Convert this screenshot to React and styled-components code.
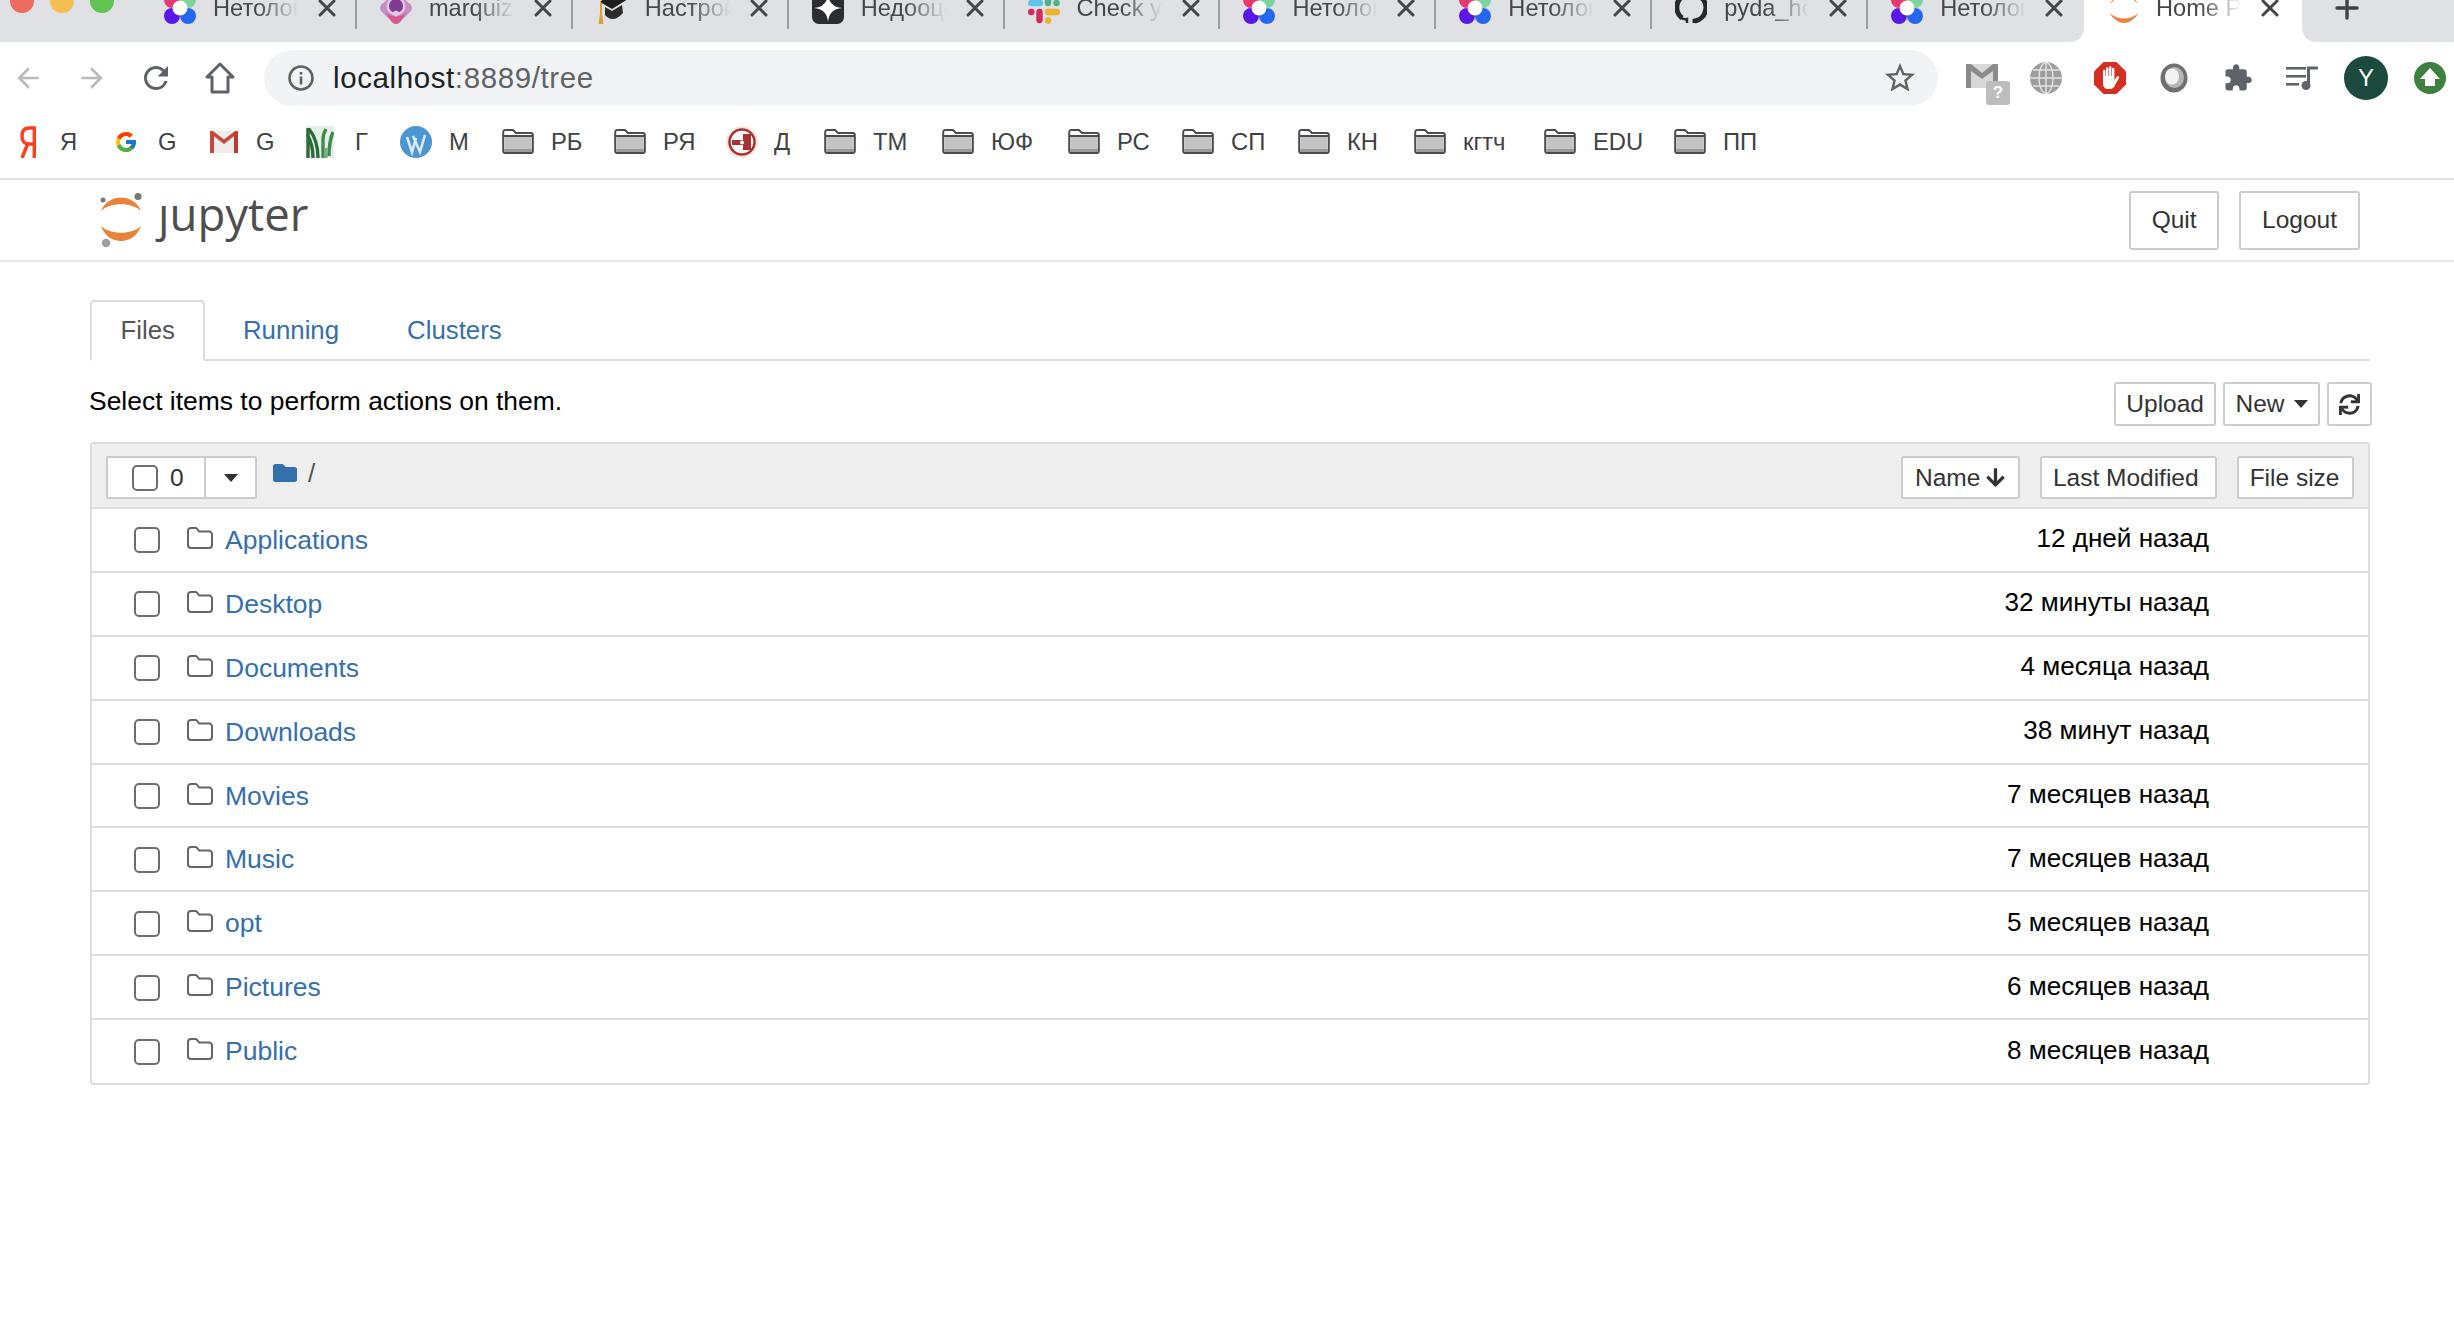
import React from 'react'
import styled, { createGlobalStyle } from 'styled-components'
import { FcGoogle } from 'react-icons/fc'
import { FaFolder, FaArrowDown, FaSync } from 'react-icons/fa'

const GlobalStyle = createGlobalStyle`
    html, body {
        margin: 0;
        padding: 0;
        background: #fff;
        overflow: hidden;
    }
    body {
        font-family: "Liberation Sans", Arial, sans-serif;
        color: #000;
    }
    svg {
        display: block;
        flex-shrink: 0;
    }
`

const Page = styled.div`
    width: 2454px;
    height: 1340px;
    overflow: hidden;
    background: #fff;
`

/* browser chrome */
const TabStrip = styled.div`
    display: flex;
    height: 42px;
    overflow: hidden;
    background: #fff;
`
const TabsLeft = styled.div`
    display: flex;
    width: 2084px;
    padding-left: 141px;
    box-sizing: border-box;
    background: #dfe1e5;
    border-bottom-right-radius: 14px;
`
const Lights = styled.div`
    display: flex;
    gap: 16px;
    margin-left: -131px;
    margin-right: 27px;
    margin-top: -11px;
`
const Light = styled.span`
    display: block;
    width: 24px;
    height: 24px;
    border-radius: 50%;
    background: ${props => props.$color};
`
const Tab = styled.div`
    display: flex;
    align-items: center;
    box-sizing: border-box;
    width: ${props => props.$active ? '218px' : '216px'};
    height: ${props => props.$active ? '42px' : '29px'};
    padding: 0 0 ${props => props.$active ? '26px' : '13px'} ${props => props.$active ? '25px' : '23px'};
    background: ${props => props.$active ? '#fff' : 'transparent'};
    border-right: ${props => props.$sep ? '2px solid #9b9da1' : '0'};
`
const TabTitle = styled.span`
    display: block;
    width: 89px;
    margin-left: 17px;
    overflow: hidden;
    white-space: nowrap;
    font-size: 23.6px;
    line-height: 30px;
    color: #45474a;
    -webkit-mask-image: linear-gradient(to right, #000 50%, transparent 96%);
    mask-image: linear-gradient(to right, #000 50%, transparent 96%);
`
const TabClose = styled.span`
    display: block;
    margin-left: 16px;
`
const TabsRight = styled.div`
    flex: 1;
    padding: 0 0 0 33px;
    background: #dfe1e5;
    border-bottom-left-radius: 14px;
`

const Toolbar = styled.div`
    display: flex;
    align-items: center;
    height: 72px;
    box-sizing: border-box;
`
const ToolSlot = styled.div`
    display: flex;
    flex-shrink: 0;
    align-items: center;
    justify-content: center;
    width: 56px;
    height: 56px;
    margin-right: 8px;
`
const BadgeWrap = styled.div`
    position: relative;
    width: 32px;
    height: 24px;
    margin-top: -4px;
`
const Badge = styled.span`
    position: absolute;
    left: 20px;
    top: 17px;
    width: 24px;
    height: 24px;
    border-radius: 3px;
    background: #bdbdbd;
    color: #fff;
    font-size: 17px;
    font-weight: bold;
    line-height: 24px;
    text-align: center;
`
const AddressBar = styled.div`
    display: flex;
    flex-shrink: 0;
    align-items: center;
    box-sizing: border-box;
    width: 1674px;
    height: 56px;
    margin: 0 16px 0 8px;
    padding: 0 20px 0 24px;
    border-radius: 28px;
    background: #f1f3f4;
`
const Url = styled.div`
    flex: 1;
    margin-left: 19px;
    font-size: 29.5px;
    letter-spacing: 0.6px;
    color: #202124;
    span {
        color: #5f6368;
    }
`
const Avatar = styled.div`
    width: 44px;
    height: 44px;
    border-radius: 50%;
    background: #1c4a3e;
    color: #fff;
    font-size: 24px;
    line-height: 44px;
    text-align: center;
`

const BookmarkBar = styled.div`
    display: flex;
    align-items: center;
    box-sizing: border-box;
    height: 66px;
    padding: 0 0 9px 20px;
    border-bottom: 2px solid #dfe1e5;
`
const Bookmark = styled.div`
    display: flex;
    align-items: center;
    justify-content: flex-start;
    gap: ${props => props.$gap || 17}px;
    width: ${props => props.$w}px;
    font-size: 23.8px;
    color: #3f4144;
    white-space: nowrap;
`

/* jupyter page */
const Header = styled.header`
    display: flex;
    align-items: center;
    justify-content: space-between;
    height: 80px;
    padding: 0 94px 0 100px;
    border-bottom: 2px solid #e7e7e7;
`
const Brand = styled.div`
    display: flex;
    align-items: center;
    gap: 16px;
`
const BrandName = styled.span`
    font-family: "Open Sans", sans-serif;
    font-size: 45.5px;
    line-height: 54px;
    color: #4e4e4e;
    margin-top: -14px;
`
const HeaderButtons = styled.div`
    display: flex;
    gap: 20px;
`
const Button = styled.button`
    display: inline-flex;
    align-items: center;
    justify-content: center;
    gap: ${props => props.$gap || 0}px;
    box-sizing: border-box;
    height: ${props => props.$tall ? '59px' : '44px'};
    padding: 0 ${props => props.$padRight || props.$pad || 10}px 0 ${props => props.$pad || 10}px;
    background: #fff;
    border: 2px solid #ccc;
    border-radius: 3px;
    font-family: inherit;
    font-size: 24.5px;
    color: #333;
`
const Main = styled.main`
    width: 2280px;
    margin-left: 90px;
`
const NavTabs = styled.nav`
    display: flex;
    gap: 7px;
    margin-top: 38px;
    border-bottom: 2px solid #ddd;
`
const NavTab = styled.a`
    display: block;
    box-sizing: border-box;
    height: 61px;
    margin-bottom: -2px;
    padding: 0 28.5px;
    border: 2px solid ${props => props.$active ? '#ddd' : 'transparent'};
    border-bottom-color: ${props => props.$active ? '#fff' : 'transparent'};
    border-radius: 4px 4px 0 0;
    background: ${props => props.$active ? '#fff' : 'transparent'};
    color: ${props => props.$active ? '#555' : '#3470ab'};
    font-size: 25.8px;
    line-height: 57px;
`
const ActionRow = styled.div`
    display: flex;
    align-items: center;
    justify-content: space-between;
    height: 44px;
    margin: 21px -2px 16px -1px;
`
const Hint = styled.span`
    font-size: 26.45px;
    margin-top: -5px;
`
const ActionButtons = styled.div`
    display: flex;
    gap: 7px;
`
const Panel = styled.section`
    box-sizing: border-box;
    border: 2px solid #ddd;
    border-radius: 4px;
`
const PanelHead = styled.div`
    display: flex;
    justify-content: space-between;
    box-sizing: border-box;
    height: 65px;
    padding: 12px 14px 0;
    background: #eee;
    border-bottom: 2px solid #ddd;
`
const HeadLeft = styled.div`
    display: flex;
    align-items: flex-start;
`
const SelectGroup = styled.div`
    display: flex;
    box-sizing: border-box;
    height: 43px;
    background: #fff;
    border: 2px solid #ccc;
    border-radius: 2px;
`
const SelectCount = styled.div`
    display: flex;
    align-items: center;
    gap: 12px;
    box-sizing: border-box;
    width: 98px;
    padding-left: 24px;
    border-right: 2px solid #ccc;
    font-size: 24.5px;
    color: #333;
`
const SelectCaret = styled.div`
    display: flex;
    align-items: center;
    justify-content: center;
    width: 49px;
`
const Caret = styled.span`
    display: block;
    width: 0;
    height: 0;
    border-left: 7.5px solid transparent;
    border-right: 7.5px solid transparent;
    border-top: 8px solid #333;
`
const Breadcrumb = styled.div`
    display: flex;
    align-items: center;
    gap: 11px;
    margin: 2px 0 0 16px;
    font-size: 26px;
    line-height: 30px;
    color: #555;
`
const SortButtons = styled.div`
    display: flex;
    gap: 20px;
`
const SortButton = styled(Button)`
    height: 43px;
`
const Row = styled.div`
    display: flex;
    align-items: center;
    box-sizing: border-box;
    height: ${props => props.$last ? '62.5px' : '63.9px'};
    padding: 1px 159px 0 42px;
    border-bottom: ${props => props.$last ? '0' : '2px solid #ddd'};
`
const Check = styled.span`
    display: block;
    box-sizing: border-box;
    width: 26px;
    height: 26px;
    flex-shrink: 0;
    background: #fff;
    border: 2px solid #6e6e6e;
    border-radius: 5px;
`
const ItemIcon = styled.span`
    display: block;
    margin: -5px 12px 0 27px;
`
const ItemLink = styled.a`
    flex: 1;
    font-size: 26.5px;
    color: #3470ab;
`
const ItemDate = styled.span`
    font-size: 26.1px;
    color: #000;
    margin-top: -3px;
`

/* drawings */
const Icon = ({ size = 24, color = '#5f6368', children }) => (
    <svg width={size} height={size} viewBox="0 0 24 24" fill={color}>{children}</svg>
)

const CloseX = () => (
    <svg width="18" height="18" viewBox="0 0 18 18" stroke="#44464a" strokeWidth="3" strokeLinecap="round">
        <path d="M2 2 L16 16 M16 2 L2 16" />
    </svg>
)

// favicons are cut by the top of the window: the box is y -8..24 of what is drawn
const Favicon = ({ children, ...rest }) => (
    <svg width="32" height="32" viewBox="0 -8 32 32" {...rest}>{children}</svg>
)

const Netology = () => (
    <Favicon>
        <circle cx="8" cy="0" r="8" fill="#e5396f" />
        <circle cx="24" cy="0" r="8" fill="#7dd3a0" />
        <circle cx="8" cy="16" r="8" fill="#5a18e6" />
        <circle cx="24" cy="16" r="8" fill="#2468f2" />
        <circle cx="16" cy="8" r="7.5" fill="#fff" />
    </Favicon>
)
const Marquiz = () => (
    <Favicon>
        <path d="M16 -8 L30 4 Q34 8 30 12 L20 22 Q16 26 12 22 L2 12 Q-2 8 2 4 Z" fill="#c58bc5" />
        <path d="M6 13 Q16 20 26 13 L20 22 Q16 26 12 22 Z" fill="#d9568f" />
        <circle cx="16" cy="6" r="9.5" fill="#e4c6e4" />
        <circle cx="16" cy="6" r="7" fill="#7d3a90" />
        <path d="M12 13 Q16 8 20 13 L16 17 Z" fill="#e4c6e4" />
    </Favicon>
)
const GradCap = () => (
    <Favicon>
        <path d="M16 -8 L32 -1 L16 9 L4 2 Z" fill="#1e1e1e" />
        <path d="M9 7 L16 11 L26 5 L27 13 Q17 24 9 15 Z" fill="#2c2c2c" />
        <path d="M4 2 L6 3 L6 14 L7.5 24 L2.5 24 L4 14 Z" fill="#d9a03a" />
    </Favicon>
)
const YaStar = () => (
    <Favicon>
        <rect x="0" y="-8" width="32" height="32" rx="7" fill="#2b2d31" />
        <path d="M16 -6 Q17 7 30 8 Q17 9 16 22 Q15 9 2 8 Q15 7 16 -6 Z" fill="#fff" />
    </Favicon>
)
const Slack = () => (
    <Favicon strokeWidth="6.4" strokeLinecap="round">
        <path d="M3.2 3 H12" stroke="#5fc4ea" />
        <path d="M20 -3 V3" stroke="#4fb286" />
        <path d="M28.5 3 H28.6" stroke="#4fb286" />
        <path d="M3.2 12 H3.3" stroke="#d2285a" />
        <path d="M11.5 12 V20" stroke="#d2285a" />
        <path d="M20 12 H28.8" stroke="#ecb22e" />
        <path d="M20 20.5 H20.1" stroke="#ecb22e" />
    </Favicon>
)
const GithubMark = () => (
    <Favicon fill="none" stroke="#24292e" strokeWidth="5">
        <path d="M8 -4 A13.5 13.5 0 0 0 7 18" />
        <path d="M24 -4 A13.5 13.5 0 0 1 20 21 V23" />
        <path d="M3 14 Q6 20 12 19 V23" strokeWidth="2.5" />
    </Favicon>
)
const JupyterTab = () => (
    <svg width="30" height="30" viewBox="0 -7 30 30" fill="#e9833f">
        <path d="M0 13 Q15 24 30 13 Q15 33 0 13 Z" />
        <path d="M1 4 Q3 0 7 -3 L9 -3 Q5 0 1 4 Z M29 4 Q27 0 23 -3 L21 -3 Q25 0 29 4 Z" />
    </svg>
)
const tabIcons = { net: Netology, marquiz: Marquiz, cap: GradCap, ya: YaStar, slack: Slack, gh: GithubMark }

const tabs = [
    ['net', 'Нетология'], ['marquiz', 'marquiz'], ['cap', 'Настройки'], ['ya', 'Недооценка'], ['slack', 'Check your'],
    ['net', 'Нетология'], ['net', 'Нетология'], ['gh', 'pyda_home'], ['net', 'Нетология'],
]

const Folder = () => (
    <svg width="32" height="25" viewBox="0 0 32 25">
        <path d="M1.2 3 a2 2 0 0 1 2-2 H11 l3 3 H28.8 a2 2 0 0 1 2 2 V22 a2 2 0 0 1 -2 2 H3.2 a2 2 0 0 1 -2-2 Z" fill="#fff" stroke="#4a4c4f" strokeWidth="2" />
        <rect x="2.2" y="7" width="27.6" height="16" fill="#c4c4c4" />
        <path d="M1.2 7 H30.8" stroke="#4a4c4f" strokeWidth="2" />
        <rect x="2.2" y="20" width="27.6" height="3" fill="#9a9a9a" />
    </svg>
)
const YandexIcon = () => (
    <svg width="16" height="32" viewBox="0 0 16 32" fill="none" stroke="#fc3f1d" strokeWidth="3.4">
        <path d="M14.3 32 V2 H9 Q2 2 2 10 Q2 18 9 18 H14 M8 17 L2 32" />
    </svg>
)
const GmailIcon = () => (
    <svg width="28" height="22" viewBox="0 0 28 22">
        <rect x="0" y="0" width="28" height="22" rx="1.5" fill="#ececec" />
        <path d="M0 2 L14 13 L28 2 V0 H25 L14 8.5 L3 0 H0 Z" fill="#c9473a" />
        <rect x="0" y="1" width="4" height="21" fill="#c4473a" />
        <rect x="24" y="1" width="4" height="21" fill="#b63f32" />
    </svg>
)
const GrassIcon = () => (
    <svg width="28" height="32" viewBox="0 0 28 32" fill="none" strokeWidth="3.4">
        <rect width="28" height="32" fill="#e4efe5" />
        <path d="M2 32 V2 M7 32 Q7 18 1 8 M12 32 Q12 14 3 3" stroke="#2d6b3a" />
        <path d="M17 32 V14 Q17 8 20 3 M23 30 Q23 16 27 6" stroke="#3f8a4c" />
        <path d="M20 32 V22" stroke="#7fae86" />
    </svg>
)
const WpIcon = () => (
    <svg width="32" height="32" viewBox="0 0 32 32">
        <circle cx="16" cy="16" r="16" fill="#4b95d2" />
        <path d="M7 11 L12 26 L16 12 M13 10 L20 26 L25 9" fill="none" stroke="#d9ecf8" strokeWidth="2.6" />
    </svg>
)
const DIcon = () => (
    <svg width="32" height="32" viewBox="0 0 32 32">
        <circle cx="16" cy="16" r="16" fill="#f6e7dc" />
        <circle cx="16" cy="16" r="12.5" fill="#fff" stroke="#a83232" strokeWidth="2.5" />
        <path d="M17 8 H25 V24 H17 V19 H6 V14 H17 Z" fill="#a83232" />
        <circle cx="16" cy="16.5" r="2" fill="#fff" />
    </svg>
)

const bookmarks = [
    { w: 94, t: 'Я', i: <YandexIcon />, gap: 24 },
    { w: 96, t: 'G', i: <FcGoogle size={24} />, gap: 20 },
    { w: 96, t: 'G', i: <GmailIcon />, gap: 18 },
    { w: 94, t: 'Г', i: <GrassIcon />, gap: 21 },
    { w: 102, t: 'М', i: <WpIcon />, gap: 17 },
    { w: 112, t: 'РБ', i: <Folder /> },
    { w: 112, t: 'РЯ', i: <Folder /> },
    { w: 98, t: 'Д', i: <DIcon />, gap: 16 },
    { w: 118, t: 'ТМ', i: <Folder /> },
    { w: 126, t: 'ЮФ', i: <Folder /> },
    { w: 114, t: 'РС', i: <Folder /> },
    { w: 116, t: 'СП', i: <Folder /> },
    { w: 116, t: 'КН', i: <Folder /> },
    { w: 130, t: 'кгтч', i: <Folder /> },
    { w: 130, t: 'EDU', i: <Folder /> },
    { w: 80, t: 'ПП', i: <Folder /> },
]

const files = [
    ['Applications', '12 дней назад'],
    ['Desktop', '32 минуты назад'],
    ['Documents', '4 месяца назад'],
    ['Downloads', '38 минут назад'],
    ['Movies', '7 месяцев назад'],
    ['Music', '7 месяцев назад'],
    ['opt', '5 месяцев назад'],
    ['Pictures', '6 месяцев назад'],
    ['Public', '8 месяцев назад'],
]

const JupyterLogo = () => (
    <svg width="42" height="54" viewBox="0 0 42 54">
        <path d="M1 18 C8 0 34 0 41 18 C32 9 10 9 1 18 Z" fill="#e8833a" />
        <path d="M1 33 C10 42 32 42 41 33 C34 53 8 53 1 33 Z" fill="#e8833a" />
        <circle cx="38" cy="3.5" r="3.5" fill="#767677" />
        <circle cx="3" cy="7" r="2.5" fill="#767677" />
        <circle cx="6" cy="50" r="4.2" fill="#9e9e9e" />
    </svg>
)

const FolderOutline = () => (
    <svg width="26" height="22" viewBox="0 0 26 22" fill="none" stroke="#666" strokeWidth="2">
        <path d="M1 4 a3 3 0 0 1 3-3 h4.5 a2 2 0 0 1 1.6 .8 l2 2.7 H22 a3 3 0 0 1 3 3 V18 a3 3 0 0 1 -3 3 H4 a3 3 0 0 1 -3-3 Z" />
    </svg>
)

const App = () => (
    <Page>
        <GlobalStyle />
        <TabStrip>
            <TabsLeft>
                <Lights>
                    <Light $color="#ed6a5e" />
                    <Light $color="#f5bf4f" />
                    <Light $color="#61c554" />
                </Lights>
                {tabs.map(([icon, title], i) => {
                    const TabIcon = tabIcons[icon]
                    return (
                        <Tab key={i} $sep={i < 8}>
                            <TabIcon />
                            <TabTitle>{title}</TabTitle>
                            <TabClose><CloseX /></TabClose>
                        </Tab>
                    )
                })}
            </TabsLeft>
            <Tab $active>
                <JupyterTab />
                <TabTitle>Home Page</TabTitle>
                <TabClose><CloseX /></TabClose>
            </Tab>
            <TabsRight>
                <svg width="24" height="24" viewBox="0 0 24 24" stroke="#3f4144" strokeWidth="3.4" strokeLinecap="round">
                    <path d="M12 0 V18 M2 8 H22" />
                </svg>
            </TabsRight>
        </TabStrip>

        <Toolbar>
            <ToolSlot>
                <Icon size={32} color="#b9bbbe"><path d="M20 11H7.83l5.59-5.59L12 4l-8 8 8 8 1.41-1.41L7.83 13H20v-2z" /></Icon>
            </ToolSlot>
            <ToolSlot>
                <Icon size={32} color="#b9bbbe"><path d="M4 11h12.17l-5.59-5.59L12 4l8 8-8 8-1.41-1.41L16.17 13H4v-2z" /></Icon>
            </ToolSlot>
            <ToolSlot>
                <Icon size={36}><path d="M17.65 6.35A7.958 7.958 0 0 0 12 4c-4.42 0-7.99 3.58-7.99 8s3.57 8 7.99 8c3.73 0 6.84-2.55 7.73-6h-2.08A5.99 5.99 0 0 1 12 18c-3.31 0-6-2.69-6-6s2.69-6 6-6c1.66 0 3.14.69 4.22 1.78L13 11h7V4l-2.35 2.35z" /></Icon>
            </ToolSlot>
            <ToolSlot>
                <svg width="30" height="32" viewBox="0 0 30 32" fill="none" stroke="#5f6368" strokeWidth="3" strokeLinejoin="round">
                    <path d="M15 2 L2 15 H7 V30 H23 V15 H28 Z" />
                </svg>
            </ToolSlot>
            <AddressBar>
                <svg width="26" height="26" viewBox="0 0 26 26">
                    <circle cx="13" cy="13" r="11.5" fill="none" stroke="#5f6368" strokeWidth="2.6" />
                    <rect x="11.7" y="11.5" width="2.6" height="8" fill="#5f6368" />
                    <rect x="11.7" y="7" width="2.6" height="2.6" fill="#5f6368" />
                </svg>
                <Url>localhost<span>:8889/tree</span></Url>
                <Icon size={36}><path d="M22 9.24l-7.19-.62L12 2 9.19 8.63 2 9.24l5.46 4.73L5.82 21 12 17.27 18.18 21l-1.63-7.03L22 9.24zM12 15.4l-3.76 2.27 1-4.28-3.32-2.88 4.38-.38L12 6.1l1.71 4.04 4.38.38-3.32 2.88 1 4.28L12 15.4z" /></Icon>
            </AddressBar>
            <ToolSlot>
                <BadgeWrap>
                    <svg width="32" height="24" viewBox="0 0 32 24">
                        <rect width="32" height="24" fill="#d8d8d8" />
                        <path d="M0 0 H5 L16 9 L27 0 H32 V24 H27 V7 L16 15 L5 7 V24 H0 Z" fill="#8b8b8b" />
                    </svg>
                    <Badge>?</Badge>
                </BadgeWrap>
            </ToolSlot>
            <ToolSlot>
                <svg width="32" height="32" viewBox="0 0 32 32" fill="none">
                    <circle cx="16" cy="16" r="16" fill="#9e9e9e" />
                    <ellipse cx="16" cy="16" rx="7" ry="15.5" stroke="#e4e4e4" strokeWidth="1.4" />
                    <path d="M16 0 V32 M0 16 H32 M3 8 H29 M3 24 H29" stroke="#e4e4e4" strokeWidth="1.4" />
                </svg>
            </ToolSlot>
            <ToolSlot>
                <svg width="32" height="32" viewBox="0 0 32 32">
                    <polygon points="9.5,0 22.5,0 32,9.5 32,22.5 22.5,32 9.5,32 0,22.5 0,9.5" fill="#d42f21" />
                    <path d="M9 15 V9 a1.2 1.2 0 0 1 2.4 0 V14 H12 V6.5 a1.2 1.2 0 0 1 2.4 0 V14 H15 V5.5 a1.2 1.2 0 0 1 2.4 0 V14 H18 V7 a1.2 1.2 0 0 1 2.4 0 V18 L23 14.5 a1.3 1.3 0 0 1 2 1.6 L20 25 Q18.5 27 16 27 H14 Q9 27 9 21 Z" fill="#fff" />
                </svg>
            </ToolSlot>
            <ToolSlot>
                <svg width="28" height="30" viewBox="0 0 28 30">
                    <ellipse cx="14" cy="15" rx="13.5" ry="14.5" fill="#6f6f6f" />
                    <ellipse cx="14.5" cy="14.5" rx="9.5" ry="10.5" fill="#b5b5b5" />
                    <ellipse cx="12" cy="13.5" rx="7" ry="8" fill="#f2f2f2" />
                </svg>
            </ToolSlot>
            <ToolSlot>
                <Icon size={30}><path d="M20.5 11H19V7c0-1.1-.9-2-2-2h-4V3.5C13 2.12 11.88 1 10.5 1S8 2.12 8 3.5V5H4c-1.1 0-1.99.9-1.99 2v3.8H3.5c1.49 0 2.7 1.21 2.7 2.7s-1.21 2.7-2.7 2.7H2V20c0 1.1.9 2 2 2h3.8v-1.5c0-1.49 1.21-2.7 2.7-2.7 1.49 0 2.7 1.21 2.7 2.7V22H17c1.1 0 2-.9 2-2v-4h1.5c1.38 0 2.5-1.12 2.5-2.5S21.88 11 20.5 11z" /></Icon>
            </ToolSlot>
            <ToolSlot>
                <svg width="32" height="24" viewBox="0 0 32 24" fill="#5f6368">
                    <rect x="0" y="1" width="20" height="2.6" />
                    <rect x="0" y="9" width="20" height="2.6" />
                    <rect x="0" y="17" width="13" height="2.6" />
                    <rect x="21" y="1" width="3" height="19" />
                    <rect x="21" y="0.5" width="11" height="3" rx="1" />
                    <circle cx="20" cy="19.5" r="4.5" />
                </svg>
            </ToolSlot>
            <ToolSlot><Avatar>Y</Avatar></ToolSlot>
            <ToolSlot>
                <svg width="32" height="32" viewBox="0 0 32 32">
                    <circle cx="16" cy="16" r="16" fill="#3d8040" />
                    <path d="M16 6 L26 17 H21 V24 H11 V17 H6 Z" fill="#fff" />
                </svg>
            </ToolSlot>
        </Toolbar>

        <BookmarkBar>
            {bookmarks.map((b, i) => (
                <Bookmark key={i} $w={b.w} $gap={b.gap}>
                    {b.i}
                    <span>{b.t}</span>
                </Bookmark>
            ))}
        </BookmarkBar>

        <Header>
            <Brand>
                <JupyterLogo />
                <BrandName>ȷupyter</BrandName>
            </Brand>
            <HeaderButtons>
                <Button $tall $pad={20.5}>Quit</Button>
                <Button $tall $pad={21}>Logout</Button>
            </HeaderButtons>
        </Header>

        <Main>
            <NavTabs>
                <NavTab $active>Files</NavTab>
                <NavTab>Running</NavTab>
                <NavTab>Clusters</NavTab>
            </NavTabs>
            <ActionRow>
                <Hint>Select items to perform actions on them.</Hint>
                <ActionButtons>
                    <Button $pad={10}>Upload</Button>
                    <Button $pad={10.5} $gap={9}>New<Caret /></Button>
                    <Button $pad={10}><FaSync size={21} color="#333" /></Button>
                </ActionButtons>
            </ActionRow>
            <Panel>
                <PanelHead>
                    <HeadLeft>
                        <SelectGroup>
                            <SelectCount>
                                <Check />
                                0
                            </SelectCount>
                            <SelectCaret><Caret /></SelectCaret>
                        </SelectGroup>
                        <Breadcrumb>
                            <FaFolder size={24} color="#3470ab" />
                            /
                        </Breadcrumb>
                    </HeadLeft>
                    <SortButtons>
                        <SortButton $pad={12} $gap={5}>Name<FaArrowDown size={21} color="#333" /></SortButton>
                        <SortButton $pad={10.5} $padRight={16.5}>Last Modified</SortButton>
                        <SortButton $pad={10.5} $padRight={12.5}>File size</SortButton>
                    </SortButtons>
                </PanelHead>
                {files.map(([name, date], i) => (
                    <Row key={name} $last={i === files.length - 1}>
                        <Check />
                        <ItemIcon><FolderOutline /></ItemIcon>
                        <ItemLink>{name}</ItemLink>
                        <ItemDate>{date}</ItemDate>
                    </Row>
                ))}
            </Panel>
        </Main>
    </Page>
)

export default App
